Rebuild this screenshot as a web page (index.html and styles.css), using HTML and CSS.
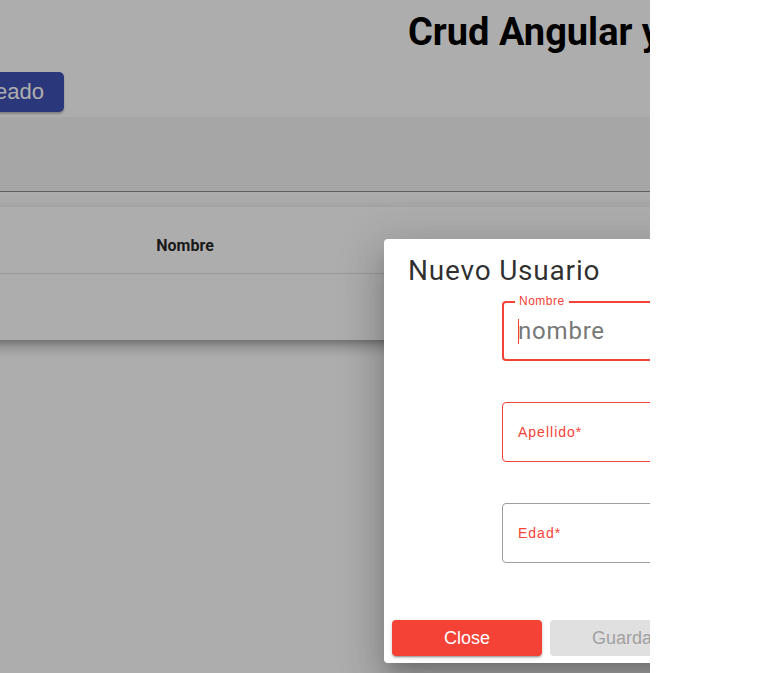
FILE: index.html
```html
<!DOCTYPE html>
<html lang="es">
<head>
<meta charset="utf-8">
<title>Crud Angular</title>
<link rel="stylesheet" href="styles.css">
</head>
<body>
<div class="viewport">
  <div class="page">
    <h1 class="title">Crud Angular y Firebase</h1>
    <div class="toolbar">
      <button class="btn-primary" type="button">Agregar Empleado</button>
    </div>
    <div class="filter"></div>
    <div class="card">
      <div class="thead">
        <div class="th"></div>
        <div class="th">Nombre</div>
        <div class="th th-left">Apellido</div>
      </div>
      <div class="trow"></div>
    </div>
  </div>
  <div class="backdrop"></div>
  <div class="dialog">
    <h2 class="dialog-title">Nuevo Usuario</h2>
    <form class="form">
      <div class="field field-focus">
        <span class="float-label">Nombre</span>
        <span class="caret"></span>
        <span class="placeholder">nombre</span>
      </div>
      <div class="field field-invalid">
        <span class="label">Apellido*</span>
      </div>
      <div class="field">
        <span class="label">Edad*</span>
      </div>
    </form>
    <div class="actions">
      <button class="btn btn-close" type="button">Close</button>
      <button class="btn btn-save" type="button" disabled>Guardar</button>
    </div>
  </div>
</div>
</body>
</html>
```
FILE: styles.css
```css
* { box-sizing: border-box; }
html, body { margin: 0; padding: 0; background: #ffffff; }
body { font-family: Roboto, "Liberation Sans", Arial, sans-serif; }

.viewport {
  position: relative;
  width: 650px;
  height: 673px;
  overflow: hidden;
  background: #ffffff;
}

.page {
  margin-left: -300px;
  width: 1100px;
}

.title {
  margin: 0;
  padding: 8px 0 0 708px;
  font-family: Roboto, sans-serif;
  font-weight: 700;
  font-size: 38px;
  line-height: 48px;
  color: #000;
  white-space: nowrap;
}

.toolbar {
  width: 364px;
  display: flex;
  justify-content: flex-end;
  margin-top: 16px;
}

.btn-primary {
  height: 40px;
  padding: 0 20px;
  border: 0;
  border-radius: 5px;
  background: #3f51b5;
  color: #fff;
  font-family: "Liberation Sans", Arial, sans-serif;
  font-size: 22px;
  box-shadow: 0 2px 2px rgba(0,0,0,.25);
  white-space: nowrap;
}

.filter {
  margin-top: 5px;
  height: 75px;
  background: rgba(0,0,0,.04);
  border-bottom: 1px solid rgba(0,0,0,.42);
  border-radius: 4px 4px 0 0;
}

.card {
  margin-top: 15px;
  background: #fff;
  box-shadow: 0 5px 5px -3px rgba(0,0,0,.2), 0 8px 10px 1px rgba(0,0,0,.14), 0 3px 14px 2px rgba(0,0,0,.12);
}

.thead {
  display: grid;
  grid-template-columns: 250px 470px 1fr;
  height: 67px;
  border-bottom: 1px solid rgba(0,0,0,.12);
}

.th {
  display: flex;
  align-items: center;
  justify-content: center;
  padding-top: 10px;
  font-family: Roboto, sans-serif;
  font-weight: 700;
  font-size: 16px;
  color: rgba(0,0,0,.87);
}

.th-left {
  justify-content: flex-start;
  padding-left: 80px;
}

.trow { height: 66px; }

.backdrop {
  position: absolute;
  inset: 0;
  background: rgba(0,0,0,.32);
}

.dialog {
  position: absolute;
  left: 384px;
  top: 239px;
  width: 600px;
  height: 424px;
  background: #fff;
  border-radius: 4px;
  box-shadow: 0 11px 15px -7px rgba(0,0,0,.2), 0 24px 38px 3px rgba(0,0,0,.14), 0 9px 46px 8px rgba(0,0,0,.12);
  display: flex;
  flex-direction: column;
  padding: 16px 8px 7px;
}

.dialog-title {
  margin: 0;
  padding-left: 16px;
  font-family: Roboto, sans-serif;
  font-weight: 400;
  font-size: 28px;
  line-height: 32px;
  letter-spacing: 0.8px;
  color: rgba(0,0,0,.82);
}

.form {
  margin-top: 14px;
  padding-left: 110px;
  display: flex;
  flex-direction: column;
}

.field {
  position: relative;
  width: 420px;
  height: 60px;
  margin-bottom: 41px;
  border: 1px solid #9e9e9e;
  border-radius: 4px;
  display: flex;
  align-items: center;
  padding-left: 15px;
  font-family: "Liberation Sans", Arial, sans-serif;
}

.field-invalid { border-color: #f44336; }

.field-focus {
  border: 2px solid #f44336;
  padding-left: 14px;
}

.label {
  font-size: 14px;
  letter-spacing: 1px;
  color: #f44336;
}

.float-label {
  position: absolute;
  left: 11px;
  top: -9px;
  padding: 0 4px 0 4px;
  background: #fff;
  font-size: 12px;
  line-height: 14px;
  letter-spacing: 0.5px;
  color: #f44336;
}

.caret {
  width: 1px;
  height: 25px;
  background: #f44336;
  margin-right: -1px;
}

.placeholder {
  font-family: Roboto, sans-serif;
  font-size: 24px;
  letter-spacing: 0.8px;
  color: #777777;
}

.actions {
  margin-top: auto;
  display: flex;
  gap: 8px;
}

.btn {
  width: 150px;
  height: 36px;
  border: 0;
  border-radius: 4px;
  font-family: "Liberation Sans", Arial, sans-serif;
  font-size: 18px;
  padding: 0;
}

.btn-close {
  background: #f44336;
  color: #fff;
  box-shadow: 0 3px 1px -2px rgba(0,0,0,.2), 0 2px 2px 0 rgba(0,0,0,.14), 0 1px 5px 0 rgba(0,0,0,.12);
}

.btn-save {
  background: #e0e0e0;
  color: #a0a0a0;
}
```
